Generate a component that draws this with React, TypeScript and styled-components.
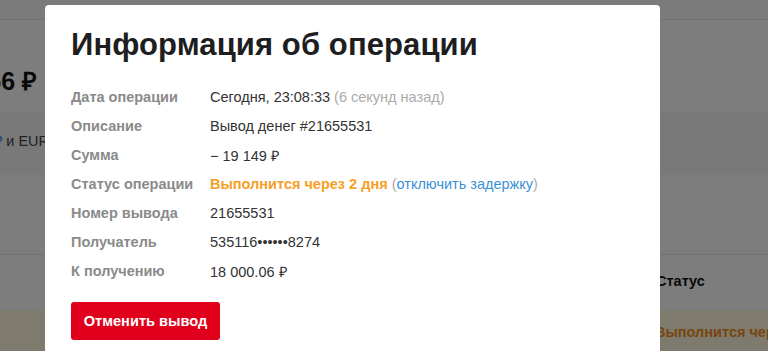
import React from "react";
import styled, { createGlobalStyle } from "styled-components";

const Global = createGlobalStyle`
  html, body { margin: 0; padding: 0; }
  body {
    width: 768px; height: 351px; overflow: hidden;
    font-family: "Liberation Sans", Arial, sans-serif;
    background: #fafafa;
  }
`;

const Page = styled.div`
  position: relative;
  width: 768px;
  height: 351px;
  overflow: hidden;
  display: flex;
  flex-direction: column;
  background: #fafafa;
`;

const TopBar = styled.div`
  height: 19px;
  flex: none;
  background: #f6f6f6;
  border-bottom: 1px solid #e2e2e2;
`;

const BalanceRow = styled.div`
  height: 92px;
  box-sizing: border-box;
  padding-top: 28px;
  flex: none;
  display: flex;
  align-items: center;
`;

const ClipLeft = styled.div`
  width: 45px;
  overflow: hidden;
  display: flex;
  justify-content: flex-end;
  white-space: nowrap;
`;

const Balance = styled.div`
  font-size: 25px;
  font-weight: 700;
  color: #111;
  padding-right: 8px;
`;

const InfoBand = styled.div`
  height: 63px;
  box-sizing: border-box;
  padding-bottom: 7px;
  flex: none;
  background: #f3f3f3;
  display: flex;
  align-items: center;
`;

const Note = styled.div`
  font-size: 14.5px;
  color: #444;
  margin-right: -4px;
`;

const Blue = styled.span`
  color: #2f7fd0;
`;

const Spacer = styled.div<{ $h: number }>`
  height: ${(p) => p.$h}px;
  flex: none;
  border-bottom: 1px solid #e4e4e4;
`;

const TableHead = styled.div`
  height: 55px;
  box-sizing: border-box;
  padding-bottom: 4px;
  flex: none;
  display: flex;
  align-items: center;
  padding-left: 656px;
  font-size: 14.5px;
  font-weight: 700;
  color: #111;
`;

const PendingRow = styled.div`
  flex: 1;
  background: #fdf6dc;
  padding-left: 655px;
  padding-top: 14px;
  font-size: 14.5px;
  font-weight: 700;
  color: #f08a1c;
  white-space: nowrap;
`;

const Overlay = styled.div`
  position: absolute;
  inset: 0;
  background: rgba(0, 0, 0, 0.5);
`;

const Modal = styled.div`
  position: absolute;
  left: 45px;
  top: 5px;
  width: 615px;
  height: 380px;
  background: #fff;
  border-radius: 4px;
  box-sizing: border-box;
  padding: 22px 26px 0;
  display: flex;
  flex-direction: column;
`;

const Title = styled.h1`
  margin: 0;
  font-size: 31px;
  line-height: 36px;
  font-weight: 700;
  color: #1e1e1e;
  letter-spacing: 0.1px;
`;

const Rows = styled.div`
  margin-top: 19px;
  display: grid;
  grid-template-columns: 139px 1fr;
  grid-auto-rows: 29px;
  align-items: center;
  font-size: 14.5px;
`;

const Label = styled.div`
  font-weight: 700;
  color: #8a8a8a;
`;

const Value = styled.div`
  color: #333;
`;

const Muted = styled.span`
  color: #aaa;
`;

const Orange = styled.span`
  color: #f5a024;
  font-weight: 700;
`;

const Link = styled.span`
  color: #3a8fd6;
`;

const Button = styled.button`
  margin-top: 17px;
  align-self: flex-start;
  width: 149px;
  height: 38px;
  border: none;
  border-radius: 3px;
  background: #e0001b;
  color: #fff;
  font-family: "Liberation Sans", Arial, sans-serif;
  font-size: 14.6px;
  font-weight: 700;
  cursor: pointer;
`;

const rows: [string, React.ReactNode][] = [
  ["Дата операции", <>Сегодня, 23:08:33 <Muted>(6 секунд назад)</Muted></>],
  ["Описание", "Вывод денег #21655531"],
  ["Сумма", "− 19 149 ₽"],
  [
    "Статус операции",
    <>
      <Orange>Выполнится через 2 дня</Orange> <Muted>(</Muted>
      <Link>отключить задержку</Link>
      <Muted>)</Muted>
    </>,
  ],
  ["Номер вывода", "21655531"],
  ["Получатель", "535116••••••8274"],
  ["К получению", "18 000.06 ₽"],
];

export default function App() {
  return (
    <>
      <Global />
      <Page>
        <TopBar />
        <BalanceRow>
          <ClipLeft>
            <Balance>1 256 ₽</Balance>
          </ClipLeft>
        </BalanceRow>
        <InfoBand>
          <ClipLeft>
            <Note>
              <Blue>₽</Blue> и EUR
            </Note>
          </ClipLeft>
        </InfoBand>
        <Spacer $h={79} />
        <TableHead>Статус</TableHead>
        <PendingRow>Выполнится через 2 дня</PendingRow>
        <Overlay />
        <Modal>
          <Title>Информация об операции</Title>
          <Rows>
            {rows.map(([l, v]) => (
              <React.Fragment key={l}>
                <Label>{l}</Label>
                <Value>{v}</Value>
              </React.Fragment>
            ))}
          </Rows>
          <Button>Отменить вывод</Button>
        </Modal>
      </Page>
    </>
  );
}
